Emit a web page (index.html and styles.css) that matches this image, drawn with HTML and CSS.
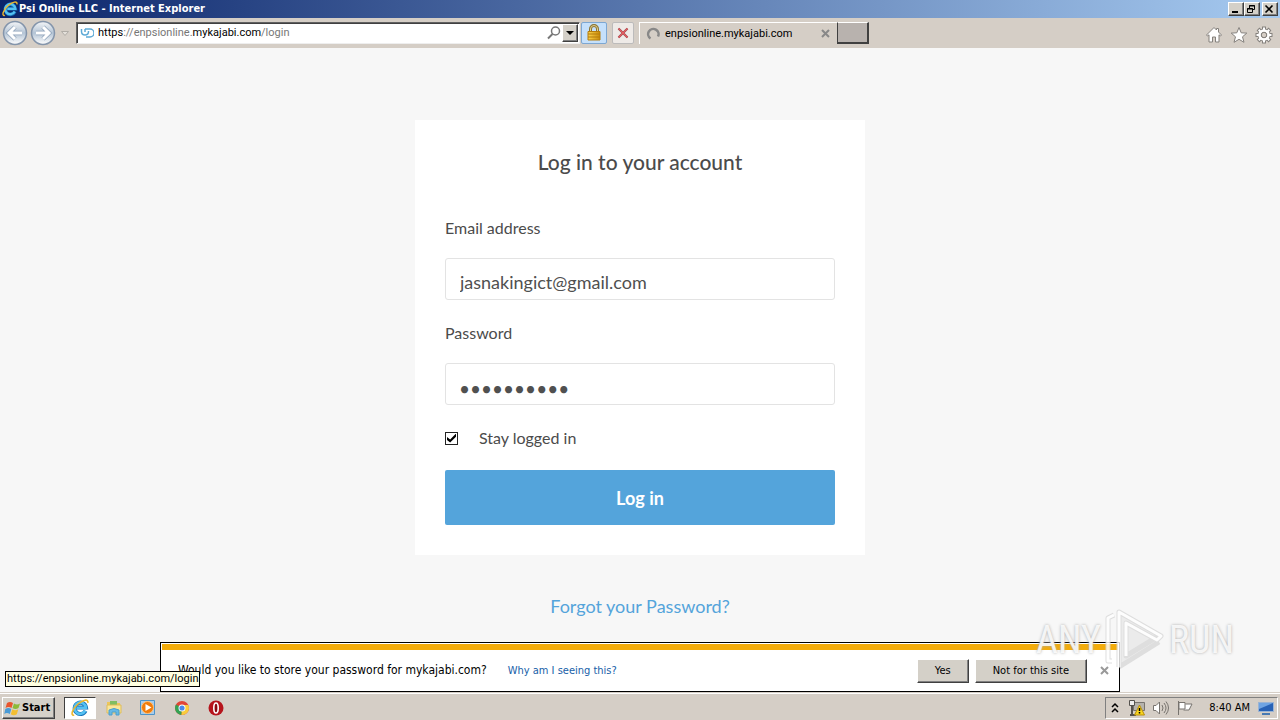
FILE: index.html
```html
<!DOCTYPE html>
<html lang="en">
<head>
  <meta charset="UTF-8">
  <title>Psi Online LLC - Internet Explorer</title>
  <link rel="stylesheet" href="styles.css">
</head>
<body>
<svg class="defs" width="0" height="0" aria-hidden="true">
  <defs>
    <linearGradient id="glass" x2="0" y2="1">
      <stop offset="0" stop-color="#f4f6f8"/>
      <stop offset=".5" stop-color="#b4c4d5"/>
      <stop offset="1" stop-color="#fff"/>
    </linearGradient>
    <linearGradient id="gold" x2="1">
      <stop offset="0" stop-color="#fbd34c"/>
      <stop offset="1" stop-color="#c98a08"/>
    </linearGradient>
    <symbol id="ie" viewBox="0 0 18 18">
      <path d="M14.5 11.8A5.7 5.7 0 1 1 15 8.6H6" fill="none" stroke="#1673b8" stroke-width="4"/>
      <path d="M14.3 11.7A5.7 5.7 0 1 1 14.9 8.8H6" fill="none" stroke="#54c1f2" stroke-width="2.6"/>
      <path d="M3.2 16.2C-1 17 1.5 9.5 7 5c5-4.200 10.500-5.500 9.800-1.200" fill="none" stroke="#edb72d" stroke-width="1.600"/>
    </symbol>
  </defs>
</svg>

<header class="titlebar">
  <svg class="title-icon" width="16" height="16"><use href="#ie"/></svg>
  <span class="title-text">Psi Online LLC - Internet Explorer</span>
  <div class="window-buttons">
    <button class="win-btn" aria-label="Minimize"><svg width="12" height="10"><path d="M3 8h6" stroke="#000" stroke-width="2"/></svg></button>
    <button class="win-btn" aria-label="Restore"><svg width="12" height="10" fill="none" stroke="#000"><path d="M4.500 4V1.500h5v4H8M4 2h6M2.500 4.500h5v4h-5zM2 5h6"/></svg></button>
    <button class="win-btn close-btn" aria-label="Close"><svg width="12" height="10"><path d="M2.500 1.500l7 7m0-7l-7 7" stroke="#000" stroke-width="1.600"/></svg></button>
  </div>
</header>

<nav class="toolbar">
  <div class="history">
    <button class="round-btn" aria-label="Back"><svg width="26" height="26"><circle cx="13" cy="13" r="11.500" fill="url(#glass)" stroke="#8495ab" stroke-width="1.500"/><path d="M13 7l-6 6 6 6m-5-6h12" fill="none" stroke="#8fa3ba" stroke-width="4.500"/><path d="M13 7l-6 6 6 6m-5-6h12" fill="none" stroke="#fff" stroke-width="3"/></svg></button>
    <button class="round-btn" aria-label="Forward"><svg width="26" height="26"><circle cx="13" cy="13" r="11.500" fill="url(#glass)" stroke="#8495ab" stroke-width="1.500"/><path d="M13 7l6 6-6 6m5-6H6" fill="none" stroke="#8fa3ba" stroke-width="4.500"/><path d="M13 7l6 6-6 6m5-6H6" fill="none" stroke="#fff" stroke-width="3"/></svg></button>
    <svg class="history-arrow" width="10" height="7"><path d="M1.500 1.500h7L5 5.500z" fill="#e4e0da" stroke="#b1ada7"/></svg>
  </div>
  <div class="address">
    <svg width="14" height="12" fill="none" stroke="#5eaad6" stroke-width="1.500"><path d="M1.500 2v2.500q0 3.500 3.500 3.500t3.500-3.500V4M5 2h5a3.500 3.500 0 0 1 0 8H6M5 2v3"/></svg>
    <a class="url" href="#">https<span class="dim">://enpsionline.</span>mykajabi.com<span class="dim">/login</span></a>
    <svg width="14" height="14" fill="none" stroke="#777"><circle cx="8.500" cy="5" r="4" stroke-width="1.500"/><path d="M5.500 8L1 12.500" stroke-width="2"/></svg>
    <button class="drop-btn" aria-label="Show address list"><svg width="8" height="5"><path d="M0 0h8L4 4z"/></svg></button>
  </div>
  <button class="tool-btn lock-btn" aria-label="Security report"><svg width="16" height="18"><path d="M4.500 9V5a3.500 3.500 0 0 1 7 0v4" fill="none" stroke="#8b7431" stroke-width="3"/><path d="M4.500 9V5a3.500 3.500 0 0 1 7 0v4" fill="none" stroke="#dfcf94"/><path d="M2 7.500h12V16H2z" fill="url(#gold)" stroke="#b57c0d"/><path d="M2 10h12m-12 3h12" stroke="#b57c0d"/></svg></button>
  <button class="tool-btn" aria-label="Stop"><svg width="14" height="14"><path d="M2.500 2.500l9 9m0-9l-9 9" stroke="#8b4e50" stroke-width="2.200"/><path d="M2.500 2.500l9 9m0-9l-9 9" stroke="#e85b60" stroke-width="1.200"/></svg></button>
  <div class="tab">
    <svg width="14" height="14" fill="none" stroke="#888" stroke-width="2.500"><path d="M4.500 11.500a5.200 5.200 0 1 1 7.500-2"/></svg>
    <span class="tab-text">enpsionline.mykajabi.com</span>
    <button class="x-btn" aria-label="Close tab"><svg width="10" height="10"><path d="M1 1l7 7m0-7L1 8" stroke="#888" stroke-width="2"/></svg></button>
  </div>
  <button class="new-tab" aria-label="New tab"></button>
  <div class="tools">
    <button class="icon-btn" aria-label="Home"><svg width="18" height="18" fill="#fff" stroke="#85817d"><path d="M1.500 9L9 1.500l2.500 2.500V2.500h2V6L16.500 9l-1 1-1.500-1.200V16h-3.500v-5h-3v5H4V8.800L2.500 10z"/></svg></button>
    <button class="icon-btn" aria-label="Favorites"><svg width="18" height="18" fill="#fff" stroke="#85817d"><path d="M9 1.500l2.200 5.300 5.600.3-4.300 3.700 1.500 5.500L9 13.300l-5 3 1.500-5.500L1.200 7.100l5.600-.3z"/></svg></button>
    <button class="icon-btn" aria-label="Tools"><svg width="18" height="18" fill="none"><path d="M9 .5v17M.5 9h17M3 3l12 12M15 3L3 15" stroke="#85817d" stroke-width="4"/><circle cx="9" cy="9" r="4.500" stroke="#85817d" stroke-width="4"/><path d="M9 1.500v4m0 7v4M1.500 9h4m7 0h4M3.700 3.700l3 3m4.600 4.600l3 3m0-10.600l-3 3m-4.600 4.600l-3 3" stroke="#fff" stroke-width="2"/><circle cx="9" cy="9" r="4.500" stroke="#fff" stroke-width="2.500"/><circle cx="9" cy="9" r="2.700" fill="#d5cec6" stroke="#85817d"/></svg></button>
  </div>
</nav>

<main class="page">
  <form class="card">
    <h1 class="card-title">Log in to your account</h1>
    <label class="label" for="email">Email address</label>
    <input class="field" id="email" type="email" value="jasnakingict@gmail.com">
    <label class="label" for="password">Password</label>
    <input class="field" id="password" type="password" value="password12">
    <label class="stay"><input class="check" type="checkbox" checked>Stay logged in</label>
    <button class="submit" type="button">Log in</button>
  </form>
  <a class="forgot" href="#">Forgot your Password?</a>

  <div class="notice">
    <p class="notice-text">Would you like to store your password for mykajabi.com?</p>
    <a class="notice-link" href="#">Why am I seeing this?</a>
    <div class="notice-buttons">
      <button class="classic-btn">Yes</button>
      <button class="classic-btn">Not for this site</button>
      <button class="x-btn" aria-label="Dismiss"><svg width="10" height="10"><path d="M1 1l7 7m0-7L1 8" stroke="#999" stroke-width="2"/></svg></button>
    </div>
  </div>
  <div class="status">https://enpsionline.mykajabi.com/login</div>
  <div class="watermark">
    <span>ANY</span>
    <svg width="60" height="64" fill="none" stroke-linejoin="round">
      <path d="M14 5l42 26-42 28z" fill="#e9e9e9"/>
      <path d="M7 53H3V10l6-3M14 59V4l42 24-4 4-31-17v33l31-19M14 59l40-25" stroke="#d8d8d8" stroke-width="5"/>
      <path d="M7 53H3V10l6-3M14 59V4l42 24-4 4-31-17v33" stroke="#fff" stroke-width="3"/>
    </svg>
    <span>RUN</span>
  </div>
</main>

<footer class="taskbar">
  <button class="start">
    <svg width="17" height="16"><path d="M3 3q3-2 6 0L7.500 8q-3-2-6 0z" fill="#e9552d"/><path d="M10 3.500q3 2 6 0L14.500 8q-3 2-6 0z" fill="#8cba38"/><path d="M1.300 9q3-2 6 0l-1.500 5q-3-2-5.500 0z" fill="#4a9bd6"/><path d="M8.300 9.300q3 2 6 0l-1.500 5q-3 2-6 0z" fill="#f3bf32"/></svg>
    Start
  </button>
  <button class="task active" aria-label="Internet Explorer"><svg width="18" height="18"><use href="#ie"/></svg></button>
  <button class="task" aria-label="Explorer"><svg width="18" height="18"><path d="M2 3h5l1 1h7v10H2z" fill="#edc75a"/><path d="M5 2h7v5H5z" fill="#80bd62"/><path d="M2 6h14v8H2z" fill="#fae69a" stroke="#dfbd58"/><path d="M4 16v-5q5-3 10 0v5h-3v-3H7v3z" fill="#67b9e5" stroke="#4c9fcd"/></svg></button>
  <button class="task" aria-label="Media Player"><svg width="18" height="18"><path d="M1.500 1.500h14v14h-14z" fill="#a8cdec" stroke="#4e94c9"/><circle cx="8.500" cy="8.500" r="6" fill="#f17c0b" stroke="#ffc27b"/><path d="M6.500 5l6 3.500-6 3.500z" fill="#fff"/></svg></button>
  <button class="task" aria-label="Chrome"><svg width="18" height="18"><circle cx="9" cy="9" r="7" fill="#e14536"/><path d="M9 9L3 5.500A7 7 0 0 0 8.500 16z" fill="#34a253"/><path d="M9 9l-.5 7A7 7 0 0 0 15.300 6H9z" fill="#f9cd3d"/><circle cx="9" cy="9" r="3.500" fill="#fff"/><circle cx="9" cy="9" r="2.600" fill="#4b88e8"/></svg></button>
  <button class="task" aria-label="Opera"><svg width="18" height="18"><circle cx="9" cy="9" r="7.500" fill="#b6141c"/><ellipse cx="9" cy="9" rx="2.200" ry="5" fill="#8a0910" stroke="#fff" stroke-width="1.600"/></svg></button>
  <div class="tray">
    <svg width="8" height="12" fill="none" stroke="#000" stroke-width="1.500"><path d="M1 5l3-3 3 3M1 10l3-3 3 3"/></svg>
    <svg class="network" width="18" height="18"><path d="M5.500 3.500h11v8h-11z" fill="#b5b2ac" stroke="#77736e"/><path d="M1.500 1.500h5v5h-5z" fill="#eee" stroke="#55524e"/><path d="M4 7v9m-2 0h6" stroke="#55524e" stroke-width="2"/><path d="M11.500 6l5 10h-10z" fill="#f9d51e" stroke="#b78d0d"/><path d="M11.500 9v3m0 1v1.500" stroke="#000" stroke-width="1.500"/></svg>
    <svg width="18" height="16" fill="none" stroke="#77736e"><path d="M1.500 5.500H4L7.500 2v12L4 10.500H1.500z" fill="#fff"/><path d="M10 5q2 3 0 6m2-8q4 5 0 10m2-11.500q5 6.500 0 13"/></svg>
    <svg width="18" height="16" fill="#fff" stroke="#77736e"><path d="M2.500 1v14M3 2.500h6V9H3zM9.500 4H16l-3 6H7.500"/></svg>
    <time class="clock">8:40 AM</time>
    <svg width="18" height="16"><path d="M1.500 2.500h15v9h-15z" fill="#2862b6" stroke="#9bb4d4"/><path d="M2 3h14L2 9z" fill="#6fa4e3"/><path d="M5 14h8" stroke="#4879b2" stroke-width="2"/></svg>
  </div>
</footer>
</body>
</html>
```
FILE: styles.css
```css
* {
  box-sizing: border-box;
}

body {
  display: flex;
  flex-direction: column;
  min-height: 100vh;
  margin: 0;
  font: 11px/14px "DejaVu Sans Condensed", Tahoma, sans-serif;
  color: #000;
  background: #f7f7f7;
}

svg {
  display: block;
  flex: none;
}

button {
  padding: 0;
  border: 0;
  background: none;
  font: inherit;
  color: inherit;
}

a {
  text-decoration: none;
}

.defs {
  position: absolute;
}

/* title bar */
.titlebar {
  display: flex;
  align-items: center;
  height: 18px;
  padding: 0 2px;
  background: linear-gradient(90deg, #0a246a, #a6caf0);
}

.title-text {
  margin-left: 1px;
  font-weight: bold;
  color: #fff;
}

.window-buttons {
  display: flex;
  margin-left: auto;
}

.win-btn,
.drop-btn,
.classic-btn,
.start {
  background: #d4d0c8;
  border: 1px solid;
  border-color: #fff #404040 #404040 #fff;
  box-shadow: inset -1px -1px #808080;
}

.win-btn {
  width: 16px;
  height: 14px;
}

.close-btn {
  margin-left: 2px;
}

/* toolbar */
.toolbar {
  display: flex;
  align-items: center;
  height: 30px;
  padding: 0 7px 0 2px;
  background: #d5cec6;
}

.history {
  display: flex;
  align-items: center;
  gap: 2px;
  margin-right: 6px;
}

.history-arrow {
  margin-left: 2px;
}

.address {
  display: flex;
  align-items: center;
  flex: 0 1 504px;
  height: 22px;
  padding: 0 1px 0 3px;
  background: #fff;
  border: 1px solid;
  border-color: #606060 #eee #eee #606060;
  box-shadow: inset 1px 1px #404040;
}

.url {
  flex: 1;
  margin-left: 4px;
  color: #000;
}

.url,
.tab-text,
.status {
  font: 11px/14px Roboto, Tahoma, sans-serif;
}

.dim {
  color: #777;
}

.drop-btn {
  display: flex;
  align-items: center;
  justify-content: center;
  width: 16px;
  height: 18px;
  margin-left: 1px;
}

.tool-btn {
  display: flex;
  align-items: center;
  justify-content: center;
  width: 22px;
  height: 22px;
  margin-left: 5px;
  background: #eeeae7;
  border: 1px solid #bcbbbb;
  border-radius: 2px;
}

.lock-btn {
  width: 26px;
  margin-left: 1px;
  background: #c5e0fb;
  border-color: #7da7d2;
}

.tab {
  display: flex;
  align-items: center;
  width: 198px;
  height: 22px;
  margin-left: 5px;
  padding: 0 6px;
  border: 1px solid #fff;
  border-width: 1px 0 0 1px;
}

.tab-text {
  flex: 1;
  margin-left: 5px;
}

.new-tab {
  width: 32px;
  height: 22px;
  background: #b8b2ae;
  border: 1px solid;
  border-color: #fff #404040 #404040;
  border-width: 1px 2px 2px 1px;
}

.tools {
  display: flex;
  gap: 7px;
  margin-left: auto;
  padding-top: 4px;
}

/* login page */
.page {
  position: relative;
  display: flex;
  flex-direction: column;
  align-items: center;
  flex: 1;
  padding: 72px 20px 70px;
  font-family: Lato, sans-serif;
}

.card {
  display: flex;
  flex-direction: column;
  width: 100%;
  max-width: 450px;
  padding: 30px;
  background: #fff;
  font-size: 16px;
  line-height: 24px;
  color: #4b4b4b;
}

.card-title {
  margin: 0 0 42px;
  font-size: 21px;
  line-height: 24px;
  font-weight: 500;
  text-align: center;
}

.label {
  margin-bottom: 18px;
}

.field {
  width: 100%;
  height: 42px;
  margin: 0 0 21px;
  padding: 6px 14px 0;
  border: 1px solid #e3e3e3;
  border-radius: 3px;
  font: 18px Lato, sans-serif;
  color: #505050;
}

/* larger bullets */
.field[type="password"] {
  padding: 8px 13px 0;
  font-size: 19px;
}

.stay {
  display: flex;
  align-items: center;
  gap: 21px;
  margin-bottom: 20px;
}

.check {
  display: grid;
  place-items: center;
  width: 13px;
  height: 13px;
  margin: 0;
  appearance: none;
  background: #fff;
  border: 1px solid #222;
}

.check:checked::before {
  content: '';
  width: 9px;
  height: 9px;
  background: #000;
  clip-path: polygon(0 40%, 35% 68%, 100% 0, 100% 35%, 35% 100%, 0 72%);
}

.submit {
  height: 55px;
  background: #54a4db;
  border-radius: 2px;
  font-size: 18px;
  font-weight: bold;
  color: #fff;
}

.forgot {
  margin-top: 39px;
  font-size: 18px;
  line-height: 24px;
  color: #54a4db;
}

/* password bar */
.notice {
  position: absolute;
  bottom: 0;
  left: 12.5%;
  display: flex;
  align-items: center;
  width: 75%;
  height: 50px;
  padding: 0 9px 0 17px;
  background: #fff;
  border: 1px solid #000;
  box-shadow: inset 0 0 0 1px #fff, inset 0 7px #f3ac0a;
  font: 11px/14px "DejaVu Sans Condensed", Tahoma, sans-serif;
}

.notice-text {
  margin: 5px 21px 0 0;
  font-size: 12px;
}

.notice-link {
  margin-top: 7px;
  color: #1760a8;
}

.notice-buttons {
  display: flex;
  align-items: center;
  gap: 6px;
  margin: 7px 0 0 auto;
}

.classic-btn {
  height: 24px;
  padding: 0 17px;
}

.x-btn {
  padding-left: 7px;
}

.tab .x-btn {
  padding: 0;
}

.status {
  position: absolute;
  bottom: 5px;
  left: 5px;
  padding: 0 1px;
  background: #ffffe1;
  border: 1px solid #000;
}

.watermark {
  position: absolute;
  right: 46px;
  bottom: 20px;
  display: flex;
  align-items: center;
  gap: 4px;
  font: 38px/40px "Liberation Sans Narrow", "Roboto Condensed", "Liberation Sans", sans-serif;
  color: rgba(255, 255, 255, .85);
  text-shadow: 0 0 3px #aaa;
  pointer-events: none;
}

.watermark svg {
  opacity: .8;
}

/* taskbar */
.taskbar {
  display: flex;
  align-items: center;
  height: 28px;
  padding: 2px 2px 0;
  background: #d5cec6;
  border-top: 1px solid #d5cec6;
  box-shadow: inset 0 1px #fff;
}

.start {
  display: flex;
  align-items: center;
  gap: 1px;
  height: 22px;
  margin-right: 9px;
  padding: 0 4px 0 1px;
  font-weight: bold;
}

.task {
  display: flex;
  align-items: center;
  justify-content: center;
  width: 32px;
  height: 22px;
  margin-right: 2px;
}

.active {
  background: #fff;
  border: 1px solid;
  border-color: #404040 #fff #fff #404040;
}

.tray {
  display: flex;
  align-items: center;
  gap: 6px;
  height: 22px;
  margin-left: auto;
  padding: 0 2px 0 5px;
  border: 1px solid;
  border-color: #808080 #fff #fff #808080;
}

.network {
  margin-left: 3px;
}

.clock {
  margin: 0 1px 0 9px;
}
```
